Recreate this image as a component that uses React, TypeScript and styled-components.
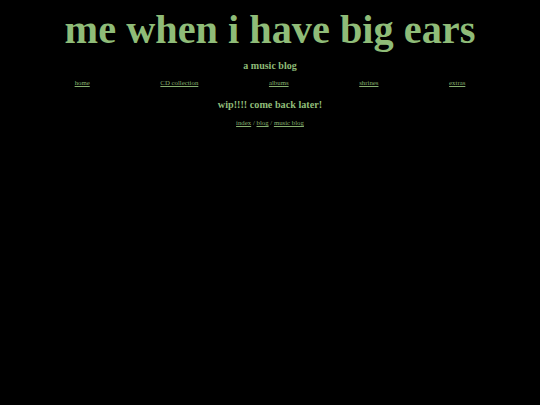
import React from "react";
import styled, { createGlobalStyle } from "styled-components";

const GlobalStyle = createGlobalStyle`
  html, body {
    margin: 0;
    padding: 0;
    background: #000000;
  }
  body {
    font-family: "Liberation Serif", "Times New Roman", serif;
    color: #8fbc78;
  }
`;

const Page = styled.div`
  width: 540px;
  min-height: 405px;
  display: flex;
  flex-direction: column;
  align-items: center;
  background: #000000;
`;

const Title = styled.h1`
  margin: 9px 0 0;
  font-size: 40.3px;
  line-height: 42px;
  font-weight: bold;
  color: #8fbc78;
`;

const Subtitle = styled.h3`
  margin: 9px 0 0;
  font-size: 10px;
  line-height: 12px;
  font-weight: bold;
`;

const Nav = styled.nav`
  align-self: stretch;
  display: flex;
  justify-content: space-evenly;
  margin: 7px 4px 0;
`;

const Link = styled.a`
  font-size: 6.8px;
  line-height: 8px;
  color: #86b06f;
  text-decoration: underline;
`;

const Notice = styled.h2`
  margin: 12px 0 0;
  font-size: 10.2px;
  line-height: 12px;
  font-weight: bold;
`;

const Crumbs = styled.div`
  margin-top: 8px;
  font-size: 6.8px;
  line-height: 8px;
  color: #86b06f;
`;

const navItems = ["home", "CD collection", "albums", "shrines", "extras"];

export default function App() {
  return (
    <>
      <GlobalStyle />
      <Page>
        <Title>me when i have big ears</Title>
        <Subtitle>a music blog</Subtitle>
        <Nav>
          {navItems.map((item) => (
            <Link key={item} href="#">
              {item}
            </Link>
          ))}
        </Nav>
        <Notice>wip!!!! come back later!</Notice>
        <Crumbs>
          <Link href="#">index</Link> / <Link href="#">blog</Link> /{" "}
          <Link href="#">music blog</Link>
        </Crumbs>
      </Page>
    </>
  );
}
